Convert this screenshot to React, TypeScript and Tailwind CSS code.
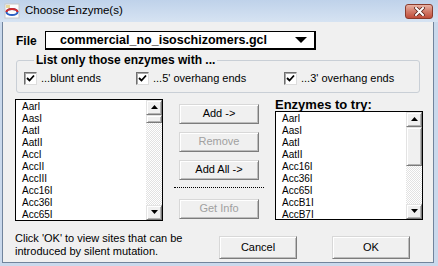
import React from "react";

const leftItems = ["AarI", "AasI", "AatI", "AatII", "AccI", "AccII", "AccIII", "Acc16I", "Acc36I", "Acc65I"];
const rightItems = ["AarI", "AasI", "AatI", "AatII", "Acc16I", "Acc36I", "Acc65I", "AccB1I", "AccB7I"];

function Arrow({ down }: { down?: boolean }) {
  return (
    <svg width="7" height="4" viewBox="0 0 7 4">
      {down ? <polygon points="0,0 7,0 3.5,4" fill="#000" /> : <polygon points="0,4 7,4 3.5,0" fill="#000" />}
    </svg>
  );
}

function ScrollButton({ children, className = "" }: { children?: React.ReactNode; className?: string }) {
  return (
    <div
      className={`flex items-center justify-center bg-[#f0f0f0] border border-t-[#e3e3e3] border-l-[#e3e3e3] border-r-[#7a7a7a] border-b-[#7a7a7a] shadow-[inset_1px_1px_0_#ffffff,inset_-1px_-1px_0_#b4b4b4] ${className}`}
    >
      {children}
    </div>
  );
}

function ListBox({ items, width, height, thumb }: { items: string[]; width: string; height: string; thumb: string }) {
  return (
    <div className={`flex border border-black bg-white ${width} ${height}`}>
      <div className="flex-1 pl-[6px] pt-[1px] overflow-hidden">
        {items.map((it, i) => (
          <div key={i} className="h-[12px] leading-[12px] text-[10px] text-black">
            {it}
          </div>
        ))}
      </div>
      <div className="w-[16px] flex flex-col">
        <ScrollButton className="h-[15px]">
          <Arrow />
        </ScrollButton>
        <ScrollButton className={thumb} />
        <div className="flex-1 bg-[image:repeating-conic-gradient(#ffffff_0%_25%,#e2e2e2_0%_50%)] bg-[length:2px_2px]" />
        <ScrollButton className="h-[15px]">
          <Arrow down />
        </ScrollButton>
      </div>
    </div>
  );
}

function Button({ label, disabled, className = "" }: { label: string; disabled?: boolean; className?: string }) {
  return (
    <div
      className={`flex items-center justify-center bg-[#f0f0f0] border border-t-[#d8d8d8] border-l-[#d8d8d8] border-r-[#7c7c7c] border-b-[#7c7c7c] shadow-[inset_1px_1px_0_#ffffff,inset_-1px_-1px_0_#bdbdbd] text-[11px] ${
        disabled ? "text-[#a0a0a0]" : "text-black"
      } ${className}`}
    >
      {label}
    </div>
  );
}

function CheckBox({ label, className = "" }: { label: string; className?: string }) {
  return (
    <div className={`flex items-center ${className}`}>
      <div className="w-[13px] h-[13px] flex items-center justify-center bg-white border border-t-[#707070] border-l-[#707070] border-r-[#dcdcdc] border-b-[#dcdcdc] shadow-[inset_1px_1px_0_#a8a8a8]">
        <svg width="9" height="9" viewBox="0 0 9 9">
          <polyline points="1,4 3.5,6.5 8,1.5" fill="none" stroke="#000" strokeWidth="1.8" />
        </svg>
      </div>
      <span className="ml-[4px] text-[11px] text-black">{label}</span>
    </div>
  );
}

export default function App() {
  return (
    <div className="w-[438px] h-[266px] flex flex-col bg-[#cad9ec] font-['Liberation_Sans',Arial,sans-serif] overflow-hidden">
      <div className="h-[22px] flex items-center bg-linear-to-b from-[#bfd2ea] to-[#d6e3f2]">
        <svg width="16" height="16" viewBox="0 0 16 16" className="ml-[4px]">
          <rect x="1" y="1" width="14" height="14" fill="#fdfdfd" stroke="#c8c8c8" />
          <ellipse cx="8" cy="9" rx="5.5" ry="3" fill="none" stroke="#2b5fc4" strokeWidth="2" />
          <path d="M2.5 9 A5.5 3 0 0 1 13.5 9" fill="none" stroke="#d42a2a" strokeWidth="2" />
          <rect x="2" y="2" width="4" height="3" fill="#e8d9a0" />
        </svg>
        <span className="ml-[5px] text-[11.5px] text-black">Choose Enzyme(s)</span>
        <div className="ml-auto mr-[5px] w-[28px] h-[15px] rounded-[3px] border border-[#8a3b2c] bg-linear-to-b from-[#e8b2a4] via-[#d27a68] to-[#bf4c39] flex items-center justify-center">
          <svg width="11" height="9" viewBox="0 0 11 9">
            <path d="M2 1 L9 8 M9 1 L2 8" stroke="#5a2218" strokeWidth="3.6" strokeLinecap="square" />
            <path d="M2 1 L9 8 M9 1 L2 8" stroke="#ffffff" strokeWidth="2" strokeLinecap="square" />
          </svg>
        </div>
      </div>

      <div className="flex-1 ml-[2px] mr-[4px] mb-[3px] border-l border-r border-b border-[#71849c] bg-[#f0f0f0] flex flex-col pl-[12px]">
        <div className="mt-[9px] ml-[1px] flex items-center h-[19px]">
          <span className="w-[29px] text-[12px] font-bold text-black">File</span>
          <div className="w-[271px] h-[19px] bg-white border-t border-l border-r-2 border-b-2 border-black flex items-center pl-[14px] pr-[7px]">
            <span className="flex-1 text-[12.5px] font-bold text-black">commercial_no_isoschizomers.gcl</span>
            <svg width="12" height="6" viewBox="0 0 12 6">
              <polygon points="0,0 12,0 6,6" fill="#000" />
            </svg>
          </div>
        </div>

        <fieldset className="mt-[3px] ml-[1px] w-[404px] border border-[#c9cfd6] rounded-[3px] pb-[5px]">
          <legend className="ml-[17px] px-[2px] text-[12px] leading-[14px] font-bold text-black">
            List only those enzymes with ...
          </legend>
          <div className="flex pt-[3px] pl-[7px]">
            <CheckBox label="...blunt ends" className="w-[112px]" />
            <CheckBox label="...5' overhang ends" className="w-[148px]" />
            <CheckBox label="...3' overhang ends" />
          </div>
        </fieldset>

        <div className="mt-[6px] flex items-start">
          <ListBox items={leftItems} width="w-[148px]" height="h-[122px]" thumb="h-[8px]" />
          <div className="ml-[16px] w-[80px] flex flex-col pt-[5px]">
            <Button label="Add ->" className="h-[20px]" />
            <Button label="Remove" disabled className="h-[20px] mt-[8px]" />
            <Button label="Add All ->" className="h-[20px] mt-[8px]" />
            <div className="mt-[7px] -ml-[5px] w-[90px] border-t border-dotted border-black" />
            <Button label="Get Info" disabled className="h-[20px] mt-[11px]" />
          </div>
          <div className="ml-[16px] flex flex-col">
            <span className="h-[12px] leading-[12px] text-[13px] font-bold text-black">Enzymes to try:</span>
            <ListBox items={rightItems} width="w-[148px]" height="h-[109px]" thumb="h-[39px]" />
          </div>
        </div>

        <div className="flex items-start">
          <p className="mt-[11px] w-[204px] text-[11px] leading-[13px] text-black">
            Click 'OK' to view sites that can be
            <br />
            introduced by silent mutation.
          </p>
          <Button label="Cancel" className="mt-[15px] w-[78px] h-[23px]" />
          <Button label="OK" className="mt-[15px] ml-[35px] w-[78px] h-[23px]" />
        </div>
      </div>
    </div>
  );
}
